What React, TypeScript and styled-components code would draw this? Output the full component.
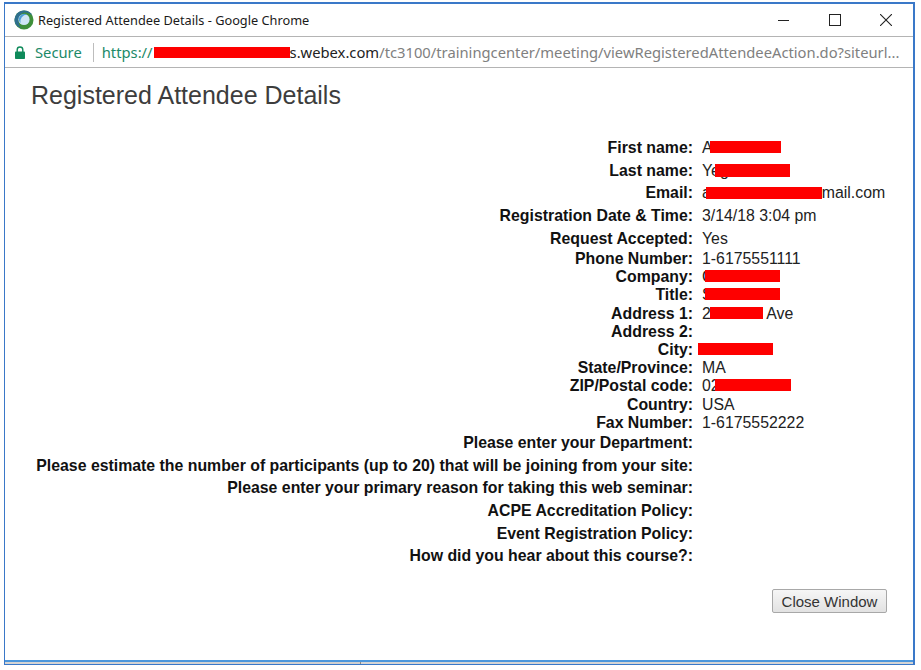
import React from 'react';
import styled, { createGlobalStyle } from 'styled-components';

const GlobalStyle = createGlobalStyle`
  html, body {
    margin: 0;
    padding: 0;
    background: #fff;
  }
`;

const Window = styled.div`
  box-sizing: border-box;
  width: 911px;
  height: 663px;
  margin: 2px 0 0 4px;
  border: solid #3a78c8;
  border-width: 2px 2px 1px 1px;
  display: flex;
  flex-direction: column;
  font-family: 'Liberation Sans', Arial, sans-serif;
`;

const TitleBar = styled.div`
  box-sizing: border-box;
  height: 33px;
  flex: none;
  display: flex;
  align-items: center;
  padding: 0 21px 0 9px;
  border-bottom: 1px solid #b4b4b4;
`;

const WindowTitle = styled.div`
  flex: 1;
  margin-left: 4px;
  font-family: 'Noto Sans', sans-serif;
  font-size: 12.75px;
  color: #1a1a1a;
`;

const WindowButtons = styled.div`
  display: flex;
  align-items: center;
  gap: 39px;
`;

const AddressBar = styled.div`
  box-sizing: border-box;
  height: 31px;
  flex: none;
  display: flex;
  align-items: center;
  padding: 0 0 0 10px;
  border-bottom: 1px solid #b4b4b4;
  font-family: 'Noto Sans', sans-serif;
  font-size: 14.75px;
  white-space: nowrap;
`;

const Secure = styled.span`
  margin-left: 10px;
  color: #1c8a68;
`;

const Separator = styled.span`
  width: 1px;
  height: 19px;
  margin: 0 8px 0 11px;
  background: #bdbdbd;
`;

const UrlScheme = styled.span`
  color: #1c8a68;
`;

const UrlHost = styled.span`
  color: #222;
`;

const UrlPath = styled.span`
  color: #808080;
`;

const Redact = styled.span<{ $width: number; $shift?: number; $height?: number; $drop?: number }>`
  display: inline-block;
  width: ${p => p.$width}px;
  height: ${p => p.$height ?? 12}px;
  margin-left: ${p => p.$shift ?? 0}px;
  vertical-align: ${p => -(p.$drop ?? 0)}px;
  background: #fe0000;
`;

const Content = styled.div`
  flex: 1;
  display: flex;
  flex-direction: column;
`;

const Heading = styled.h1`
  margin: 13px 0 0 26px;
  height: 29px;
  font-size: 25px;
  line-height: 29px;
  font-weight: 400;
  color: #3d3d3d;
`;

const Details = styled.div`
  margin-top: 27px;
  display: flex;
  flex-direction: column;
  font-size: 15.85px;
  color: #222;
`;

const Row = styled.div<{ $tall?: boolean }>`
  height: ${p => (p.$tall ? 22.6 : 18.2)}px;
  display: grid;
  grid-template-columns: 688px 1fr;
  column-gap: 9px;
  align-items: center;
  white-space: nowrap;
`;

const Label = styled.div`
  text-align: right;
  font-weight: 700;
  color: #111;
`;

const Value = styled.div``;

const Footer = styled.div`
  margin-top: 22px;
  padding-right: 26px;
  display: flex;
  justify-content: flex-end;
`;

const CloseButton = styled.button`
  box-sizing: border-box;
  width: 115px;
  height: 24px;
  padding: 0;
  border: 1px solid #a8a8a8;
  border-radius: 2px;
  background: linear-gradient(#f6f6f6, #e2e2e2);
  font-family: 'Liberation Sans', Arial, sans-serif;
  font-size: 15px;
  color: #333;
`;

const ScrollTrack = styled.div`
  box-sizing: border-box;
  height: 4px;
  flex: none;
  border-top: 2px solid #4a96dc;
  background: linear-gradient(90deg, #d4d4d4 0, #cfcfcf 355px, #8a8a8a 355px, #8a8a8a 356px, #d4d4d4 356px);
`;

const ChromeLogo = () => (
  <svg width="20" height="20" viewBox="0 0 20 20">
    <circle cx="10" cy="10" r="9.5" fill="#3f8f3a" />
    <path d="M10 .5A9.5 9.5 0 0 0 1 13a9 9 0 0 0 6 5 11 11 0 0 1 0-14 9 9 0 0 1 11.5 1.5A9.5 9.5 0 0 0 10 .5z" fill="#2e6f8e" />
    <circle cx="10" cy="9.5" r="5.6" fill="#cfe6f5" />
    <path d="M5 8a5.6 5.6 0 0 1 8-3.5A7 7 0 0 0 6.5 13 5.6 5.6 0 0 1 5 8z" fill="#4d9fd8" />
  </svg>
);

const LockIcon = () => (
  <svg width="10" height="13" viewBox="0 0 10 13">
    <path d="M2.2 6V3.8a2.8 2.8 0 0 1 5.6 0V6" fill="none" stroke="#0f8a5a" strokeWidth="1.4" />
    <rect x="0" y="5.5" width="10" height="7.5" rx="0.8" fill="#0f8a5a" />
  </svg>
);

const MinimizeIcon = () => (
  <svg width="12" height="12" viewBox="0 0 12 12">
    <path d="M0 6.5h11" stroke="#222" strokeWidth="1" />
  </svg>
);

const MaximizeIcon = () => (
  <svg width="12" height="12" viewBox="0 0 12 12">
    <rect x="0.5" y="0.5" width="11" height="11" fill="none" stroke="#222" strokeWidth="1" />
  </svg>
);

const CloseIcon = () => (
  <svg width="12" height="12" viewBox="0 0 12 12">
    <path d="M0 0l12 12M12 0L0 12" stroke="#222" strokeWidth="1.1" />
  </svg>
);

const App = () => (
  <Window>
    <GlobalStyle />
    <TitleBar>
      <ChromeLogo />
      <WindowTitle>Registered Attendee Details - Google Chrome</WindowTitle>
      <WindowButtons>
        <MinimizeIcon />
        <MaximizeIcon />
        <CloseIcon />
      </WindowButtons>
    </TitleBar>
    <AddressBar>
      <LockIcon />
      <Secure>Secure</Secure>
      <Separator />
      <UrlScheme>https://</UrlScheme>
      <Redact $width={136} $shift={1} $height={11} />
      <UrlHost>s.webex.com</UrlHost>
      <UrlPath>/tc3100/trainingcenter/meeting/viewRegisteredAttendeeAction.do?siteurl...</UrlPath>
    </AddressBar>
    <Content>
      <Heading>Registered Attendee Details</Heading>
      <Details>
        <Row $tall>
          <Label>First name:</Label>
          <Value>A<Redact $width={71} $shift={-3} /></Value>
        </Row>
        <Row $tall>
          <Label>Last name:</Label>
          <Value>Yeg<Redact $width={75} $shift={-14} $height={13} $drop={1} /></Value>
        </Row>
        <Row $tall>
          <Label>Email:</Label>
          <Value>a<Redact $width={116} $shift={-5} $drop={1} />mail.com</Value>
        </Row>
        <Row $tall>
          <Label>Registration Date &amp; Time:</Label>
          <Value>3/14/18 3:04 pm</Value>
        </Row>
        <Row $tall>
          <Label>Request Accepted:</Label>
          <Value>Yes</Value>
        </Row>
        <Row>
          <Label>Phone Number:</Label>
          <Value>1-6175551111</Value>
        </Row>
        <Row>
          <Label>Company:</Label>
          <Value>C<Redact $width={75} $shift={-8} /></Value>
        </Row>
        <Row>
          <Label>Title:</Label>
          <Value>S<Redact $width={75} $shift={-8} /></Value>
        </Row>
        <Row>
          <Label>Address 1:</Label>
          <Value>2<Redact $width={53} $shift={-1} /> Ave</Value>
        </Row>
        <Row>
          <Label>Address 2:</Label>
          <Value />
        </Row>
        <Row>
          <Label>City:</Label>
          <Value><Redact $width={75} $shift={-4} /></Value>
        </Row>
        <Row>
          <Label>State/Province:</Label>
          <Value>MA</Value>
        </Row>
        <Row>
          <Label>ZIP/Postal code:</Label>
          <Value>02<Redact $width={76} $shift={-5} /></Value>
        </Row>
        <Row>
          <Label>Country:</Label>
          <Value>USA</Value>
        </Row>
        <Row>
          <Label>Fax Number:</Label>
          <Value>1-6175552222</Value>
        </Row>
        <Row $tall>
          <Label>Please enter your Department:</Label>
          <Value />
        </Row>
        <Row $tall>
          <Label>Please estimate the number of participants (up to 20) that will be joining from your site:</Label>
          <Value />
        </Row>
        <Row $tall>
          <Label>Please enter your primary reason for taking this web seminar:</Label>
          <Value />
        </Row>
        <Row $tall>
          <Label>ACPE Accreditation Policy:</Label>
          <Value />
        </Row>
        <Row $tall>
          <Label>Event Registration Policy:</Label>
          <Value />
        </Row>
        <Row $tall>
          <Label>How did you hear about this course?:</Label>
          <Value />
        </Row>
      </Details>
      <Footer>
        <CloseButton>Close Window</CloseButton>
      </Footer>
    </Content>
    <ScrollTrack />
  </Window>
);

export default App;
